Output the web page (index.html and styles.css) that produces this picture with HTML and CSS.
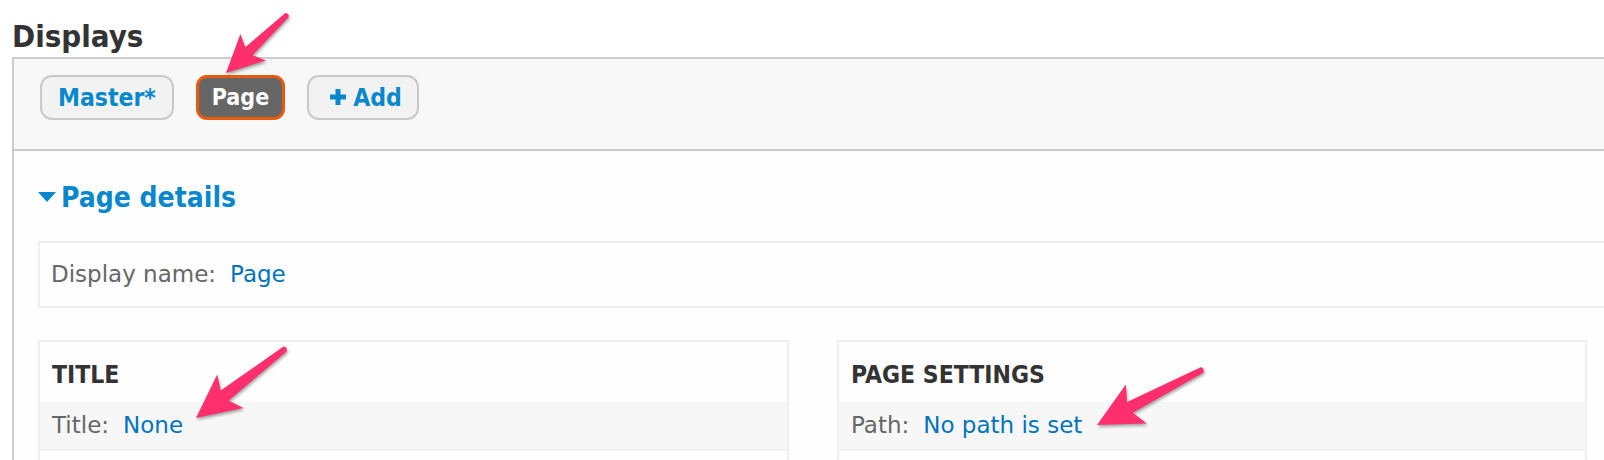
FILE: index.html
```html
<!DOCTYPE html>
<html>
<head>
<meta charset="utf-8">
<link rel="stylesheet" href="styles.css">
</head>
<body>
<h2 class="page-title">Displays</h2>
<div class="displays">
  <div class="tabs">
    <a class="tab">Master*</a>
    <a class="tab active">Page</a>
    <a class="tab add"><svg class="plus" viewBox="0 0 16 16" width="16" height="16"><path d="M5.5 0h5v5.5H16v5h-5.5V16h-5v-5.5H0v-5h5.5z" fill="#0787cc"/></svg>Add</a>
  </div>
  <div class="content">
    <div class="details-title"><span class="tri"></span>Page details</div>
    <div class="name-box"><span class="label">Display name:</span><a class="link">Page</a></div>
    <div class="columns">
      <div class="col">
        <div class="col-head">TITLE</div>
        <div class="row"><span class="label">Title:</span><a class="link">None</a></div>
        <div class="row empty"></div>
      </div>
      <div class="col">
        <div class="col-head">PAGE SETTINGS</div>
        <div class="row"><span class="label">Path:</span><a class="link">No path is set</a></div>
        <div class="row empty"></div>
      </div>
    </div>
  </div>
</div>
<svg class="arrows" width="1604" height="460" viewBox="0 0 1604 460">
  <path class="arrow" d="M226 73 L240.4 33.9 L245.2 47.2 L285.3 13 Q289.2 13.2 288.7 17 L252.6 55.3 L266 60.5 Z"/>
  <path class="arrow" d="M196 418 L217.2 374.5 L220.7 390.6 L283.4 346.6 Q287.6 346.6 286.6 351.4 L228.7 400.6 L243.4 408 Z"/>
  <path class="arrow" d="M1097 425 L1125.8 384.6 L1127 402 L1200.7 367.2 Q1204.8 367.8 1203.3 372.8 L1132.8 412.8 L1146.8 423.6 Z"/>
</svg>
</body>
</html>
```
FILE: styles.css
```css
html, body {
  margin: 0;
  padding: 0;
  overflow: hidden;
  background: #fff;
  font-family: "DejaVu Sans", Verdana, sans-serif;
  width: 1604px;
  height: 460px;
}

.page-title {
  margin: 0 0 5px 12px;
  padding-top: 20px;
  font-family: "DejaVu Sans Condensed", "DejaVu Sans", sans-serif;
  font-stretch: condensed;
  font-size: 31px;
  line-height: 32px;
  font-weight: bold;
  color: #333;
}

.displays {
  width: 1640px;
  border-top: 2px solid #ccc;
  border-left: 2px solid #ccc;
  margin-left: 12px;
  height: 500px;
  background: #fefefe;
}

.tabs {
  display: flex;
  align-items: flex-start;
  gap: 22px;
  height: 92px;
  box-sizing: border-box;
  padding: 16px 0 0 26px;
  background: #f8f8f8;
  border-bottom: 2px solid #ccc;
}

.tab {
  display: flex;
  align-items: center;
  height: 45px;
  box-sizing: border-box;
  border: 2px solid #c9c9c9;
  border-radius: 12px;
  background: #f2f2f2;
  padding: 0 16px;
  font-family: "DejaVu Sans Condensed", "DejaVu Sans", sans-serif;
  font-stretch: condensed;
  font-size: 24.5px;
  font-weight: bold;
  color: #0787cc;
  line-height: 41px;
}

.tab.active {
  border: 3px solid #ea5a0c;
  border-radius: 11px;
  background: #666;
  color: #fff;
  font-size: 23px;
  padding: 0 13px;
}

.tab.add {
  padding: 0 15px;
}

.plus {
  margin: 0 7px 2px 6px;
}

.content {
  padding: 32px 24px 0 24px;
}

.details-title {
  display: flex;
  align-items: center;
  font-family: "DejaVu Sans Condensed", "DejaVu Sans", sans-serif;
  font-stretch: condensed;
  font-size: 28px;
  line-height: 30px;
  font-weight: bold;
  color: #0787cc;
}

.tri {
  width: 0;
  height: 0;
  border-left: 9.5px solid transparent;
  border-right: 9.5px solid transparent;
  border-top: 10px solid #0787cc;
  margin: -2px 5px 0 0;
}

.name-box {
  margin-top: 28px;
  height: 67px;
  box-sizing: border-box;
  border: 2px solid #efefef;
  background: #fefefe;
  padding-left: 11px;
  font-size: 23px;
  line-height: 63px;
}

.label {
  color: #666;
}

.link {
  color: #0074bd;
  margin-left: 14px;
}

.columns {
  display: grid;
  grid-template-columns: 751px 750px;
  gap: 48px;
  margin-top: 32px;
}

.col {
  border: 2px solid #efefef;
  border-bottom: none;
  background: #fefefe;
  font-size: 23px;
}

.col-head {
  height: 60px;
  box-sizing: border-box;
  padding: 5px 0 0 12px;
  line-height: 56px;
  font-family: "DejaVu Sans Condensed", "DejaVu Sans", sans-serif;
  font-stretch: condensed;
  font-size: 24.5px;
  font-weight: bold;
  color: #333;
}

.row {
  height: 49px;
  box-sizing: border-box;
  padding-left: 12px;
  line-height: 47px;
  background: #f7f7f7;
  border-bottom: 2px solid #efefef;
}

.row.empty {
  background: #fefefe;
  border-bottom: none;
  height: 40px;
}

.arrows {
  position: absolute;
  top: 0;
  left: 0;
  pointer-events: none;
}

.arrow {
  fill: #fe2f6c;
  filter: drop-shadow(1px 2px 1.5px rgba(0, 0, 0, 0.35));
}
```
